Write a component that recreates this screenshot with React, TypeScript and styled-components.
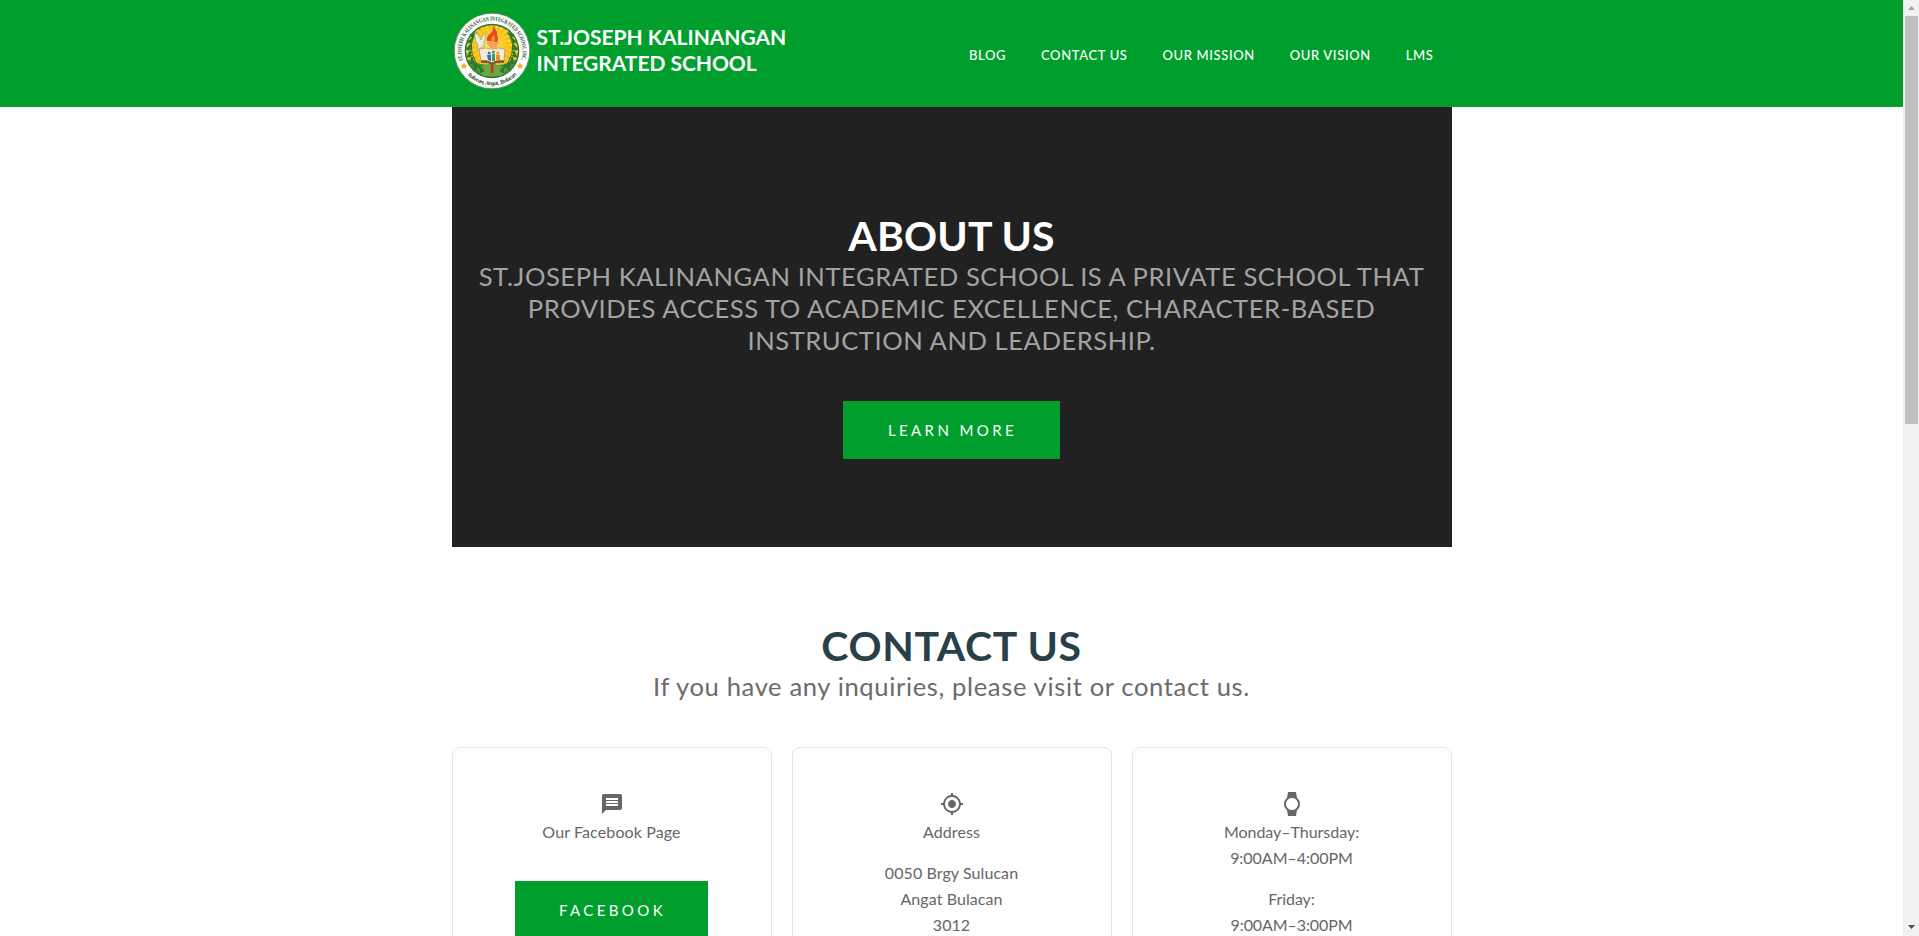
import React from 'react';
import styled, { createGlobalStyle } from 'styled-components';
import { MdMessage, MdMyLocation, MdWatch } from 'react-icons/md';

const GREEN = '#009f2d';

const GlobalStyle = createGlobalStyle`
  * { box-sizing: border-box; }
  body {
    margin: 0;
    background: #fff;
    font-family: Lato, "Open Sans", sans-serif;
    color: #666;
    overflow: hidden;
  }
`;

const Window = styled.div`
  display: flex;
  height: 936px;
  overflow: hidden;
`;

const Page = styled.div`
  flex: 1;
  height: 936px;
  overflow: hidden;
`;

const Header = styled.header`
  display: flex;
  justify-content: center;
  height: 107px;
  background: ${GREEN};
`;

const HeaderInner = styled.div`
  display: flex;
  justify-content: space-between;
  width: 1000px;
  padding: 12px 18px 0 1.5px;
`;

const Brand = styled.a`
  display: flex;
  gap: 5.5px;
  color: #fff;
`;

const BrandName = styled.div`
  padding-top: 12px;
  font-size: 21px;
  font-weight: 700;
  line-height: 26px;
  letter-spacing: -0.04px;
  white-space: nowrap;
`;

const Nav = styled.nav`
  display: flex;
  gap: 34.8px;
  padding-top: 32.5px;
`;

const NavLink = styled.a`
  color: #fff;
  font-size: 13px;
  font-weight: 500;
  line-height: 20px;
  letter-spacing: 0.64px;
  white-space: nowrap;
`;

const Container = styled.main`
  width: 1000px;
  margin: 0 auto;
  text-align: center;
`;

const Hero = styled.section`
  height: 440px;
  padding-top: 103px;
  background: #212121;
`;

const Title = styled.h2<{ $color: string; $spacing: number }>`
  margin: 0 0 -2px;
  color: ${(p) => p.$color};
  font-size: 41px;
  font-weight: 700;
  line-height: 52px;
  letter-spacing: ${(p) => p.$spacing}px;
`;

const Subtitle = styled.p<{ $color: string; $spacing: number }>`
  margin: 0 0 45px;
  color: ${(p) => p.$color};
  font-size: 25.6px;
  line-height: 32px;
  letter-spacing: ${(p) => p.$spacing}px;
`;

const Button = styled.a<{ $width: number }>`
  display: block;
  width: ${(p) => p.$width}px;
  height: 58px;
  margin: 0 auto;
  padding-left: 2px;
  background: ${GREEN};
  color: #fff;
  font-size: 15px;
  line-height: 58px;
  letter-spacing: 3.4px;
  white-space: nowrap;
`;

const Contact = styled.section`
  padding-top: 73px;
`;

const Cards = styled.div`
  display: grid;
  grid-template-columns: repeat(3, 320px);
  gap: 20px;
`;

const Card = styled.article`
  height: 300px;
  padding-top: 44px;
  border: 1px solid #e4e4e4;
  border-radius: 8px;
`;

const CardIcon = styled.div`
  display: flex;
  justify-content: center;
  height: 27px;
  font-size: 24px;
  color: #666;
`;

const CardText = styled.p<{ $gap?: number; $spacing?: number }>`
  margin: 0 0 ${(p) => p.$gap ?? 15}px;
  font-size: 16px;
  line-height: 26px;
  letter-spacing: ${(p) => p.$spacing ?? 0.08}px;
`;

const Scrollbar = styled.aside`
  display: flex;
  flex-direction: column;
  justify-content: space-between;
  align-items: center;
  width: 16px;
  height: 936px;
  padding: 6px 1px 7px 2px;
  background: #f1f1f1;
`;

const Thumb = styled.div`
  width: 13px;
  height: 408px;
  margin: 6px 0 auto;
  background: #c1c1c1;
`;

const Arrow = styled.div<{ $down?: boolean }>`
  width: 7px;
  height: 4px;
  background: ${(p) => (p.$down ? '#505050' : '#a3a3a3')};
  clip-path: ${(p) => (p.$down ? 'polygon(0 0, 100% 0, 50% 100%)' : 'polygon(50% 0, 100% 100%, 0 100%)')};
`;

const leaves = [
  [-20, -14], [-22, -8], [-23, -1], [-22, 6], [-19, 12], [-15, 17], [-9, 20],
];

const Seal = () => (
  <svg width="78" height="78" viewBox="-39 -39 78 78">
    <defs>
      <path id="sealTop" d="M-26.6 15 A30.5 30.5 0 1 1 26.6 15" />
      <path id="sealBottom" d="M-27 21 A34.2 34.2 0 0 0 27 21" />
      <radialGradient id="sun" cx="50%" cy="38%" r="62%">
        <stop offset="0" stopColor="#fff0a0" />
        <stop offset="0.35" stopColor="#fbc81c" />
        <stop offset="1" stopColor="#e5a50c" />
      </radialGradient>
      <clipPath id="inner"><circle r="26" /></clipPath>
    </defs>
    <circle r="37.8" fill="#fff" stroke="#5d8a5b" strokeWidth="0.9" />
    <circle r="27.3" fill="#247239" />
    <circle r="25.8" fill="url(#sun)" />
    <g clipPath="url(#inner)">
      {Array.from({ length: 24 }, (_, i) => (
        <path key={i} d="M0 -8 L-1.2 -40 L1.2 -40 Z" fill="#ffe15a" opacity="0.7" transform={`rotate(${i * 15} 0 -6)`} />
      ))}
      <path d="M-27 7 Q-14 15 0 14 Q14 15 27 7 L24 27 H-24 Z" fill="#398c35" />
      <path d="M-15 17 L0 12 L15 17 L10 25 H-10 Z" fill="#6fa442" />
    </g>
    {[-1, 1].map((side) => (
      <g key={side} transform={`scale(${side} 1)`} fill="#2b7a2c">
        <path d="M-18 -18 Q-27 4 -8 21" fill="none" stroke="#23702b" strokeWidth="1" />
        {leaves.map(([x, y], i) => (
          <g key={i} transform={`translate(${x} ${y}) rotate(${-i * 14})`}>
            <ellipse cx="2.8" cy="-1" rx="3.5" ry="1.4" transform="rotate(-35)" />
            <ellipse cx="-0.6" cy="-1" rx="2.8" ry="1.2" transform="rotate(35)" />
          </g>
        ))}
      </g>
    ))}
    <path d="M-17 -19 Q-13 -16 -11 -11 Q-10 -15 -7 -18 Q-6 -12 -8 -9 Q-7 -5 -10 -4 L-15 -1 L-14 -6 Q-18 -11 -17 -19 Z" fill="#e9eddb" stroke="#8c9a78" strokeWidth="0.6" />
    <path d="M-6 -9 H8 L4 -3 H-2 Z" fill="#f4a25c" />
    <path d="M-5 -10 Q-6 -15 -1 -18 Q2 -21 0 -26 Q6 -20 5 -16 Q7 -12 5 -9 Z" fill="#e8481f" />
    <path d="M-1 -10 Q-1 -14 2 -16 Q4 -12 2 -9 Z" fill="#f98b2b" />
    <rect x="-1.2" y="12" width="2.6" height="10" fill="#c03a20" />
    <path d="M-13 -2 Q-6 -4 0 -2 Q7 -4 13 -2 L12 10 Q5 9 0 12 Q-6 9 -11 10 Z" fill="#f3ead2" stroke="#a78d5b" strokeWidth="0.7" />
    <path d="M-11 9.5 Q-5 8.5 0 11.5 Q5 8.5 12 9.5 V12 Q5 11 0 14 Q-5 11 -11 12 Z" fill="#7c5436" />
    <g fill="#2e73b8"><circle cx="-2.8" cy="2" r="1.5" /><path d="M-5 4 H-1 V10 L-4 9 Z" /></g>
    <g fill="#3d9a50"><circle cx="1.4" cy="1" r="1.5" /><path d="M0 3 H3 V10 H0 Z" /></g>
    <g fill="#f08a24"><circle cx="5.8" cy="2" r="1.5" /><path d="M4 4 H8 V9 H4 Z" /></g>
    <text fontSize="6" fontWeight="700" fontFamily="Liberation Serif, serif" fill="#234f2c">
      <textPath href="#sealTop" startOffset="6" textLength="114" lengthAdjust="spacingAndGlyphs">ST.JOSEPH KALINANGAN INTEGRATED SCHOOL INC.</textPath>
    </text>
    <text fontSize="6" fontWeight="700" fontStyle="italic" fontFamily="Liberation Serif, serif" fill="#234f2c">
      <textPath href="#sealBottom" startOffset="3.5" textLength="55">Sulucan, Angat, Bulacan</textPath>
    </text>
    {[-28, 28].map((x) => (
      <path key={x} transform={`translate(${x} 15)`} fill="#edaa22" d="M0 -3.6 L1 -1.2 L3.5 -1.1 L1.6 0.5 L2.2 3 L0 1.6 L-2.2 3 L-1.6 0.5 L-3.5 -1.1 L-1 -1.2 Z" />
    ))}
  </svg>
);

export default function App() {
  return (
    <Window>
      <GlobalStyle />
      <Page>
        <Header>
          <HeaderInner>
            <Brand>
              <Seal />
              <BrandName>
                ST.JOSEPH KALINANGAN
                <br />
                INTEGRATED SCHOOL
              </BrandName>
            </Brand>
            <Nav>
              {['BLOG', 'CONTACT US', 'OUR MISSION', 'OUR VISION', 'LMS'].map((item) => (
                <NavLink key={item}>{item}</NavLink>
              ))}
            </Nav>
          </HeaderInner>
        </Header>
        <Container>
          <Hero>
            <Title $color="#fff" $spacing={0.14}>ABOUT US</Title>
            <Subtitle $color="#a3a3a3" $spacing={0.54}>
              ST.JOSEPH KALINANGAN INTEGRATED SCHOOL IS A PRIVATE SCHOOL THAT
              <br />
              PROVIDES ACCESS TO ACADEMIC EXCELLENCE, CHARACTER-BASED
              <br />
              INSTRUCTION AND LEADERSHIP.
            </Subtitle>
            <Button $width={217}>LEARN MORE</Button>
          </Hero>
          <Contact>
            <Title $color="#293f49" $spacing={0.65}>CONTACT US</Title>
            <Subtitle $color="#6b6b6b" $spacing={0.62}>If you have any inquiries, please visit or contact us.</Subtitle>
            <Cards>
              <Card>
                <CardIcon><MdMessage /></CardIcon>
                <CardText $gap={36} $spacing={0.12}>Our Facebook Page</CardText>
                <Button $width={193}>FACEBOOK</Button>
              </Card>
              <Card>
                <CardIcon><MdMyLocation /></CardIcon>
                <CardText>Address</CardText>
                <CardText>
                  0050 Brgy Sulucan
                  <br />
                  Angat Bulacan
                  <br />
                  3012
                </CardText>
              </Card>
              <Card>
                <CardIcon><MdWatch /></CardIcon>
                <CardText $spacing={-0.03}>
                  Monday–Thursday:
                  <br />
                  9:00AM–4:00PM
                </CardText>
                <CardText $spacing={-0.1}>
                  Friday:
                  <br />
                  9:00AM–3:00PM
                </CardText>
              </Card>
            </Cards>
          </Contact>
        </Container>
      </Page>
      <Scrollbar>
        <Arrow />
        <Thumb />
        <Arrow $down />
      </Scrollbar>
    </Window>
  );
}
